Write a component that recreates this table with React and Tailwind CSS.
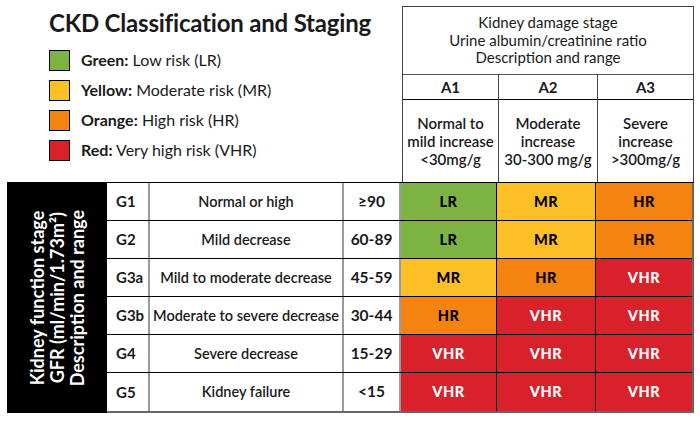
const legend = [
  { color: "bg-[#7db343]", label: "Green:", text: "Low risk (LR)" },
  { color: "bg-[#fdbf26]", label: "Yellow:", text: "Moderate risk (MR)" },
  { color: "bg-[#f4830f]", label: "Orange:", text: "High risk (HR)" },
  { color: "bg-[#d8212b]", label: "Red:", text: "Very high risk (VHR)" },
];

const risk = {
  LR: "bg-[#7db343] text-black",
  MR: "bg-[#fdbf26] text-black",
  HR: "bg-[#f4830f] text-black",
  VHR: "bg-[#d8212b] text-white",
};

const rows = [
  { g: "G1", desc: "Normal or high", range: "≥90", cells: ["LR", "MR", "HR"] },
  { g: "G2", desc: "Mild decrease", range: "60-89", cells: ["LR", "MR", "HR"] },
  { g: "G3a", desc: "Mild to moderate decrease", range: "45-59", cells: ["MR", "HR", "VHR"] },
  { g: "G3b", desc: "Moderate to severe decrease", range: "30-44", cells: ["HR", "VHR", "VHR"] },
  { g: "G4", desc: "Severe decrease", range: "15-29", cells: ["VHR", "VHR", "VHR"] },
  { g: "G5", desc: "Kidney failure", range: "<15", cells: ["VHR", "VHR", "VHR"] },
];

const albumin = [
  { a: "A1", lines: ["Normal to", "mild increase", "<30mg/g"] },
  { a: "A2", lines: ["Moderate", "increase", "30-300 mg/g"] },
  { a: "A3", lines: ["Severe", "increase", ">300mg/g"] },
];

export default function App() {
  return (
    <div className="w-[700px] h-[422px] bg-white text-[#1a1a1a] font-['Lato','Liberation_Sans',sans-serif] overflow-hidden">
      <div className="flex pt-[6px]">
        {/* Title + legend */}
        <div className="w-[402px] pl-[49px] pt-[2px]">
          <h1 className="text-[24px] leading-[30px] font-bold tracking-[-0.2px]">CKD Classification and Staging</h1>
          <div className="mt-[12px] flex flex-col gap-[10px]">
            {legend.map((l) => (
              <div key={l.label} className="flex items-center gap-[11px] h-[20px]">
                <span className={`w-[21px] h-[21px] border-[1.5px] border-black ${l.color}`} />
                <span className="text-[16px]">
                  <b className="font-bold">{l.label}</b>
                  <span> {l.text}</span>
                </span>
              </div>
            ))}
          </div>
        </div>

        {/* Kidney damage header */}
        <div className="w-[292px] h-[176px] border-[1.5px] border-b-0 border-[#444] flex flex-col">
          <div className="h-[67px] flex flex-col items-center justify-center text-[15px] leading-[17.5px] text-center">
            <span>Kidney damage stage</span>
            <span>Urine albumin/creatinine ratio</span>
            <span>Description and range</span>
          </div>
          <div className="grid grid-cols-[96px_99px_1fr] flex-1 border-t border-[#555]">
            {albumin.map((c, i) => (
              <div key={c.a} className={`flex flex-col ${i < 2 ? "border-r border-[#444]" : ""}`}>
                <div className="h-[25px] flex items-center justify-center border-b border-black text-[15px] font-bold">{c.a}</div>
                <div className="flex-1 flex flex-col items-center justify-center text-[15px] leading-[18px] font-semibold text-center">
                  {c.lines.map((t) => (
                    <span key={t}>{t}</span>
                  ))}
                </div>
              </div>
            ))}
          </div>
        </div>
      </div>

      {/* Main table */}
      <div className="flex ml-[7px] w-[687px] h-[231px] border-t border-black">
        <div className="w-[100px] bg-black flex items-center justify-center">
          <div className="[writing-mode:vertical-rl] rotate-180 text-white font-bold text-[18px] leading-[20px] text-center">
            <div>Kidney function stage</div>
            <div>GFR (ml/min/1.73m²)</div>
            <div>Description and range</div>
          </div>
        </div>
        <div className="flex-1 grid grid-rows-6 border-r-2 border-[#666] border-b-2">
          {rows.map((r, ri) => (
            <div
              key={r.g}
              className={`grid grid-cols-[43px_194px_57px_96px_99px_1fr] ${ri < 5 ? "border-b border-black" : ""}`}
            >
              <div className="flex items-center pl-[9px] text-[15px] font-bold border-r-2 border-[#9a9a9a]">{r.g}</div>
              <div className="flex items-center justify-center text-[14.5px] font-semibold border-r-2 border-[#9a9a9a]">{r.desc}</div>
              <div className="flex items-center justify-center text-[15.5px] font-bold border-r-2 border-[#9a9a9a]">{r.range}</div>
              {r.cells.map((c, ci) => (
                <div
                  key={ci}
                  className={`flex items-center justify-center text-[14.5px] font-black tracking-[0.5px] ${risk[c]} ${ci < 2 ? "border-r border-black" : ""}`}
                >
                  {c}
                </div>
              ))}
            </div>
          ))}
        </div>
      </div>
    </div>
  );
}
